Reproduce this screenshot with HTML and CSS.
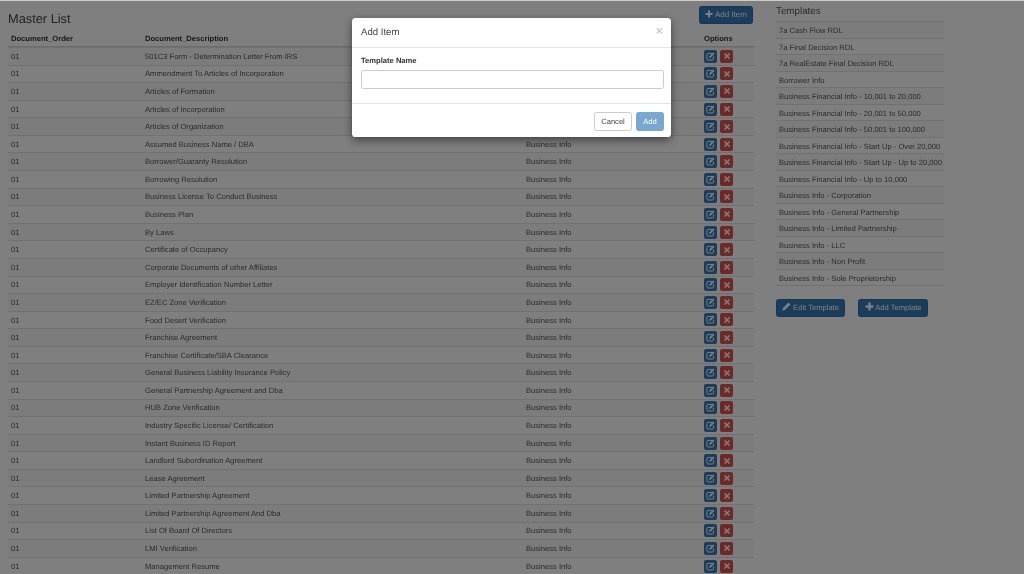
FILE: index.html
```html
<!DOCTYPE html>
<html lang="en">
<head>
<meta charset="utf-8">
<title>Master List</title>
<link rel="stylesheet" href="styles.css">
</head>
<body>
<svg class="defs" width="0" height="0" aria-hidden="true">
  <symbol id="i-plus" viewBox="0 0 10 10"><path d="M3.7 0.6h2.6v3.1h3.1v2.6H6.3v3.1H3.7V6.3H0.6V3.7h3.1z" fill="currentColor"/></symbol>
  <symbol id="i-pencil" viewBox="0 0 10 10"><path d="M7.2 0.6l2.2 2.2-6.1 6.1L0.4 9.6l0.7-2.9z" fill="currentColor"/></symbol>
  <symbol id="i-edit" viewBox="0 0 10 10"><path d="M7 1.6H2.2C1.5 1.6 1 2.1 1 2.8v4.9c0 .7.5 1.2 1.2 1.2h4.9c.7 0 1.2-.5 1.2-1.2V5" fill="none" stroke="currentColor" stroke-width="1.1"/><path d="M8 .6l1.4 1.4-4.1 4.1-1.9.5.5-1.9z" fill="currentColor"/></symbol>
  <symbol id="i-x" viewBox="0 0 10 10"><path d="M2.6 1.2L5 3.6l2.4-2.4 1.4 1.4L6.4 5l2.4 2.4-1.4 1.4L5 6.4 2.6 8.8 1.2 7.4 3.6 5 1.2 2.6z" fill="currentColor"/></symbol>
</svg>
<div class="page">
  <main class="master">
    <div class="master-head">
      <h1 class="title">Master List</h1>
      <button class="btn btn-primary btn-add-item"><svg class="ico"><use href="#i-plus"/></svg> Add Item</button>
    </div>
    <div class="table">
      <div class="row row-head"><span class="c1">Document_Order</span><span class="c2">Document_Description</span><span class="c3"></span><span class="c4">Options</span></div>
      <div class="row"><span class="c1">01</span><span class="c2">501C3 Form - Determination Letter From IRS</span><span class="c3">Business Info</span><span class="c4"><a class="mini blue"><svg class="ico-m"><use href="#i-edit"/></svg></a><a class="mini red"><svg class="ico-x"><use href="#i-x"/></svg></a></span></div>
      <div class="row"><span class="c1">01</span><span class="c2">Ammendment To Articles of Incorporation</span><span class="c3">Business Info</span><span class="c4"><a class="mini blue"><svg class="ico-m"><use href="#i-edit"/></svg></a><a class="mini red"><svg class="ico-x"><use href="#i-x"/></svg></a></span></div>
      <div class="row"><span class="c1">01</span><span class="c2">Articles of Formation</span><span class="c3">Business Info</span><span class="c4"><a class="mini blue"><svg class="ico-m"><use href="#i-edit"/></svg></a><a class="mini red"><svg class="ico-x"><use href="#i-x"/></svg></a></span></div>
      <div class="row"><span class="c1">01</span><span class="c2">Articles of Incorporation</span><span class="c3">Business Info</span><span class="c4"><a class="mini blue"><svg class="ico-m"><use href="#i-edit"/></svg></a><a class="mini red"><svg class="ico-x"><use href="#i-x"/></svg></a></span></div>
      <div class="row"><span class="c1">01</span><span class="c2">Articles of Organization</span><span class="c3">Business Info</span><span class="c4"><a class="mini blue"><svg class="ico-m"><use href="#i-edit"/></svg></a><a class="mini red"><svg class="ico-x"><use href="#i-x"/></svg></a></span></div>
      <div class="row"><span class="c1">01</span><span class="c2">Assumed Business Name / DBA</span><span class="c3">Business Info</span><span class="c4"><a class="mini blue"><svg class="ico-m"><use href="#i-edit"/></svg></a><a class="mini red"><svg class="ico-x"><use href="#i-x"/></svg></a></span></div>
      <div class="row"><span class="c1">01</span><span class="c2">Borrower/Guaranty Resolution</span><span class="c3">Business Info</span><span class="c4"><a class="mini blue"><svg class="ico-m"><use href="#i-edit"/></svg></a><a class="mini red"><svg class="ico-x"><use href="#i-x"/></svg></a></span></div>
      <div class="row"><span class="c1">01</span><span class="c2">Borrowing Resolution</span><span class="c3">Business Info</span><span class="c4"><a class="mini blue"><svg class="ico-m"><use href="#i-edit"/></svg></a><a class="mini red"><svg class="ico-x"><use href="#i-x"/></svg></a></span></div>
      <div class="row"><span class="c1">01</span><span class="c2">Business License To Conduct Business</span><span class="c3">Business Info</span><span class="c4"><a class="mini blue"><svg class="ico-m"><use href="#i-edit"/></svg></a><a class="mini red"><svg class="ico-x"><use href="#i-x"/></svg></a></span></div>
      <div class="row"><span class="c1">01</span><span class="c2">Business Plan</span><span class="c3">Business Info</span><span class="c4"><a class="mini blue"><svg class="ico-m"><use href="#i-edit"/></svg></a><a class="mini red"><svg class="ico-x"><use href="#i-x"/></svg></a></span></div>
      <div class="row"><span class="c1">01</span><span class="c2">By Laws</span><span class="c3">Business Info</span><span class="c4"><a class="mini blue"><svg class="ico-m"><use href="#i-edit"/></svg></a><a class="mini red"><svg class="ico-x"><use href="#i-x"/></svg></a></span></div>
      <div class="row"><span class="c1">01</span><span class="c2">Certificate of Occupancy</span><span class="c3">Business Info</span><span class="c4"><a class="mini blue"><svg class="ico-m"><use href="#i-edit"/></svg></a><a class="mini red"><svg class="ico-x"><use href="#i-x"/></svg></a></span></div>
      <div class="row"><span class="c1">01</span><span class="c2">Corporate Documents of other Affiliates</span><span class="c3">Business Info</span><span class="c4"><a class="mini blue"><svg class="ico-m"><use href="#i-edit"/></svg></a><a class="mini red"><svg class="ico-x"><use href="#i-x"/></svg></a></span></div>
      <div class="row"><span class="c1">01</span><span class="c2">Employer Identification Number Letter</span><span class="c3">Business Info</span><span class="c4"><a class="mini blue"><svg class="ico-m"><use href="#i-edit"/></svg></a><a class="mini red"><svg class="ico-x"><use href="#i-x"/></svg></a></span></div>
      <div class="row"><span class="c1">01</span><span class="c2">EZ/EC Zone Verification</span><span class="c3">Business Info</span><span class="c4"><a class="mini blue"><svg class="ico-m"><use href="#i-edit"/></svg></a><a class="mini red"><svg class="ico-x"><use href="#i-x"/></svg></a></span></div>
      <div class="row"><span class="c1">01</span><span class="c2">Food Desert Verification</span><span class="c3">Business Info</span><span class="c4"><a class="mini blue"><svg class="ico-m"><use href="#i-edit"/></svg></a><a class="mini red"><svg class="ico-x"><use href="#i-x"/></svg></a></span></div>
      <div class="row"><span class="c1">01</span><span class="c2">Franchise Agreement</span><span class="c3">Business Info</span><span class="c4"><a class="mini blue"><svg class="ico-m"><use href="#i-edit"/></svg></a><a class="mini red"><svg class="ico-x"><use href="#i-x"/></svg></a></span></div>
      <div class="row"><span class="c1">01</span><span class="c2">Franchise Certificate/SBA Clearance</span><span class="c3">Business Info</span><span class="c4"><a class="mini blue"><svg class="ico-m"><use href="#i-edit"/></svg></a><a class="mini red"><svg class="ico-x"><use href="#i-x"/></svg></a></span></div>
      <div class="row"><span class="c1">01</span><span class="c2">General Business Liability Insurance Policy</span><span class="c3">Business Info</span><span class="c4"><a class="mini blue"><svg class="ico-m"><use href="#i-edit"/></svg></a><a class="mini red"><svg class="ico-x"><use href="#i-x"/></svg></a></span></div>
      <div class="row"><span class="c1">01</span><span class="c2">General Partnership Agreement and Dba</span><span class="c3">Business Info</span><span class="c4"><a class="mini blue"><svg class="ico-m"><use href="#i-edit"/></svg></a><a class="mini red"><svg class="ico-x"><use href="#i-x"/></svg></a></span></div>
      <div class="row"><span class="c1">01</span><span class="c2">HUB Zone Verification</span><span class="c3">Business Info</span><span class="c4"><a class="mini blue"><svg class="ico-m"><use href="#i-edit"/></svg></a><a class="mini red"><svg class="ico-x"><use href="#i-x"/></svg></a></span></div>
      <div class="row"><span class="c1">01</span><span class="c2">Industry Specific License/ Certification</span><span class="c3">Business Info</span><span class="c4"><a class="mini blue"><svg class="ico-m"><use href="#i-edit"/></svg></a><a class="mini red"><svg class="ico-x"><use href="#i-x"/></svg></a></span></div>
      <div class="row"><span class="c1">01</span><span class="c2">Instant Business ID Report</span><span class="c3">Business Info</span><span class="c4"><a class="mini blue"><svg class="ico-m"><use href="#i-edit"/></svg></a><a class="mini red"><svg class="ico-x"><use href="#i-x"/></svg></a></span></div>
      <div class="row"><span class="c1">01</span><span class="c2">Landlord Subordination Agreement</span><span class="c3">Business Info</span><span class="c4"><a class="mini blue"><svg class="ico-m"><use href="#i-edit"/></svg></a><a class="mini red"><svg class="ico-x"><use href="#i-x"/></svg></a></span></div>
      <div class="row"><span class="c1">01</span><span class="c2">Lease Agreement</span><span class="c3">Business Info</span><span class="c4"><a class="mini blue"><svg class="ico-m"><use href="#i-edit"/></svg></a><a class="mini red"><svg class="ico-x"><use href="#i-x"/></svg></a></span></div>
      <div class="row"><span class="c1">01</span><span class="c2">Limited Partnership Agreement</span><span class="c3">Business Info</span><span class="c4"><a class="mini blue"><svg class="ico-m"><use href="#i-edit"/></svg></a><a class="mini red"><svg class="ico-x"><use href="#i-x"/></svg></a></span></div>
      <div class="row"><span class="c1">01</span><span class="c2">Limited Partnership Agreement And Dba</span><span class="c3">Business Info</span><span class="c4"><a class="mini blue"><svg class="ico-m"><use href="#i-edit"/></svg></a><a class="mini red"><svg class="ico-x"><use href="#i-x"/></svg></a></span></div>
      <div class="row"><span class="c1">01</span><span class="c2">List Of Board Of Directors</span><span class="c3">Business Info</span><span class="c4"><a class="mini blue"><svg class="ico-m"><use href="#i-edit"/></svg></a><a class="mini red"><svg class="ico-x"><use href="#i-x"/></svg></a></span></div>
      <div class="row"><span class="c1">01</span><span class="c2">LMI Verification</span><span class="c3">Business Info</span><span class="c4"><a class="mini blue"><svg class="ico-m"><use href="#i-edit"/></svg></a><a class="mini red"><svg class="ico-x"><use href="#i-x"/></svg></a></span></div>
      <div class="row"><span class="c1">01</span><span class="c2">Management Resume</span><span class="c3">Business Info</span><span class="c4"><a class="mini blue"><svg class="ico-m"><use href="#i-edit"/></svg></a><a class="mini red"><svg class="ico-x"><use href="#i-x"/></svg></a></span></div>
    </div>
  </main>
  <aside class="templates">
    <h2 class="templates-title">Templates</h2>
    <ul class="tlist">
      <li>7a Cash Flow RDL</li>
      <li>7a Final Decision RDL</li>
      <li>7a RealEstate Final Decision RDL</li>
      <li>Borrower Info</li>
      <li>Business Financial Info - 10,001 to 20,000</li>
      <li>Business Financial Info - 20,001 to 50,000</li>
      <li>Business Financial Info - 50,001 to 100,000</li>
      <li>Business Financial Info - Start Up - Over 20,000</li>
      <li>Business Financial Info - Start Up - Up to 20,000</li>
      <li>Business Financial Info - Up to 10,000</li>
      <li>Business Info - Corporation</li>
      <li>Business Info - General Partnership</li>
      <li>Business Info - Limited Partnership</li>
      <li>Business Info - LLC</li>
      <li>Business Info - Non Profit</li>
      <li>Business Info - Sole Proprietorship</li>
    </ul>
    <div class="tactions">
      <button class="btn btn-primary btn-t"><svg class="ico ico-lg"><use href="#i-pencil"/></svg> Edit Template</button>
      <button class="btn btn-primary btn-t"><svg class="ico ico-lg"><use href="#i-plus"/></svg> Add Template</button>
    </div>
  </aside>
</div>
<div class="backdrop"></div>
<div class="modal">
  <div class="modal-head"><span class="modal-title">Add Item</span><span class="close">×</span></div>
  <div class="modal-body">
    <label class="label" for="tname">Template Name</label>
    <input class="input" id="tname" type="text">
  </div>
  <div class="modal-foot">
    <button class="btn btn-cancel">Cancel</button>
    <button class="btn btn-ok">Add</button>
  </div>
</div>
</body>
</html>
```
FILE: styles.css
```css
* { box-sizing: border-box; }
html { height: 100%; background: #808080; }
body {
  height: 100%;
  margin: 0;
  overflow: hidden;
  background: #fff;
  box-shadow: inset 0 1px #ccc;
  color: #555;
  font-family: "Liberation Sans", Arial, sans-serif;
  font-size: 7.6px;
  line-height: 1.43;
  text-rendering: geometricPrecision;
  filter: blur(0.5px);
}
.defs { position: absolute; }
.page { display: flex; align-items: flex-start; padding-left: 8px; }
.master { width: 746px; flex: none; }
.master-head { display: flex; justify-content: space-between; align-items: flex-start; height: 30px; padding: 6px 1px 0 0; }
.title { margin: 5px 0 0; font-size: 12.8px; font-weight: 400; line-height: 15px; color: #444; }
.btn {
  font-family: inherit;
  font-size: 7.6px;
  line-height: 12px;
  border-radius: 2.4px;
  border: 1px solid transparent;
  padding: 2px 6px;
  white-space: nowrap;
  text-rendering: geometricPrecision;
}
.btn-primary { background: #337ab7; border-color: #2e6da4; color: #fff; }
.btn-add-item { height: 18px; width: 54px; padding: 0; font-size: 8px; }
.ico { width: 8px; height: 8px; vertical-align: -1px; }
.ico-lg { width: 9px; height: 9px; }
.ico-m { width: 9px; height: 9px; display: block; }
.ico-x { width: 8px; height: 8px; display: block; }
.row { display: flex; align-items: center; height: 17.586px; padding-left: 3px; border-top: 1px solid #e2e2e2; }
.row:nth-child(even) { background: #f9f9f9; }
.row-head { height: 17px; border-top: 0; border-bottom: 1px solid #d8d8d8; font-weight: 700; background: none !important; color: #333; }
.c1 { width: 134px; flex: none; padding-top: 2px; }
.c2 { width: 381px; flex: none; padding-top: 2px; }
.c3 { width: 167px; flex: none; padding-top: 2px; }
.c4 { width: 58px; flex: none; display: flex; gap: 3px; padding-left: 11px; }
.row-head .c1, .row-head .c2 { padding-top: 3px; }
.row-head .c4 { padding-left: 11px; padding-top: 3px; }
.mini { width: 13px; height: 13px; border-radius: 2px; display: flex; align-items: center; justify-content: center; }
.blue { background: #337ab7; color: #fff; }
.red { background: #d9534f; color: #fff; }
.templates { width: 168px; margin-left: 22px; flex: none; }
.templates-title { margin: 6px 0 0; font-size: 9.8px; font-weight: 400; line-height: 12px; height: 15px; color: #555; }
.tlist { list-style: none; margin: 0; padding: 0; border-bottom: 1px solid #e2e2e2; }
.tlist li { height: 16.53px; line-height: 17.5px; padding-left: 3px; border-top: 1px solid #e2e2e2; }
.tlist li:nth-child(odd) { background: #f9f9f9; }
.tactions { display: flex; gap: 13px; margin-top: 13px; }
.btn-t { height: 18px; width: 69px; padding: 0; }
.btn-t + .btn-t { width: 70px; }
.backdrop { position: fixed; left: 0; right: 0; top: 1px; bottom: 0; background: rgba(0, 0, 0, .5); }
.modal {
  position: fixed;
  left: 352px;
  top: 18px;
  width: 319px;
  height: 119px;
  background: #fff;
  border-radius: 3.6px;
  box-shadow: 0 3px 8px rgba(0, 0, 0, .5);
}
.modal-head { display: flex; justify-content: space-between; height: 30px; padding: 9px 8px 0 9px; border-bottom: 1px solid #e5e5e5; }
.modal-title { font-size: 9.6px; line-height: 12px; color: #444; }
.close { font-size: 12.6px; line-height: 8px; font-weight: 700; color: #ccc; }
.modal-body { height: 55px; padding: 7px 7px 8px 9px; }
.label { display: block; font-weight: 700; line-height: 12px; margin-bottom: 3px; color: #333; }
.input { display: block; width: 100%; height: 19px; border: 1px solid #ccc; border-radius: 2.4px; background: #fff; }
.modal-foot { display: flex; justify-content: flex-end; gap: 4px; padding: 8px 7px 0; border-top: 1px solid #e5e5e5; }
.btn-cancel { width: 38px; height: 19px; padding: 0; background: #fff; border-color: #ccc; color: #444; }
.btn-ok { width: 28px; height: 19px; padding: 0; background: #7aa7cd; border-color: #7ca8cf; color: #fff; }
```
